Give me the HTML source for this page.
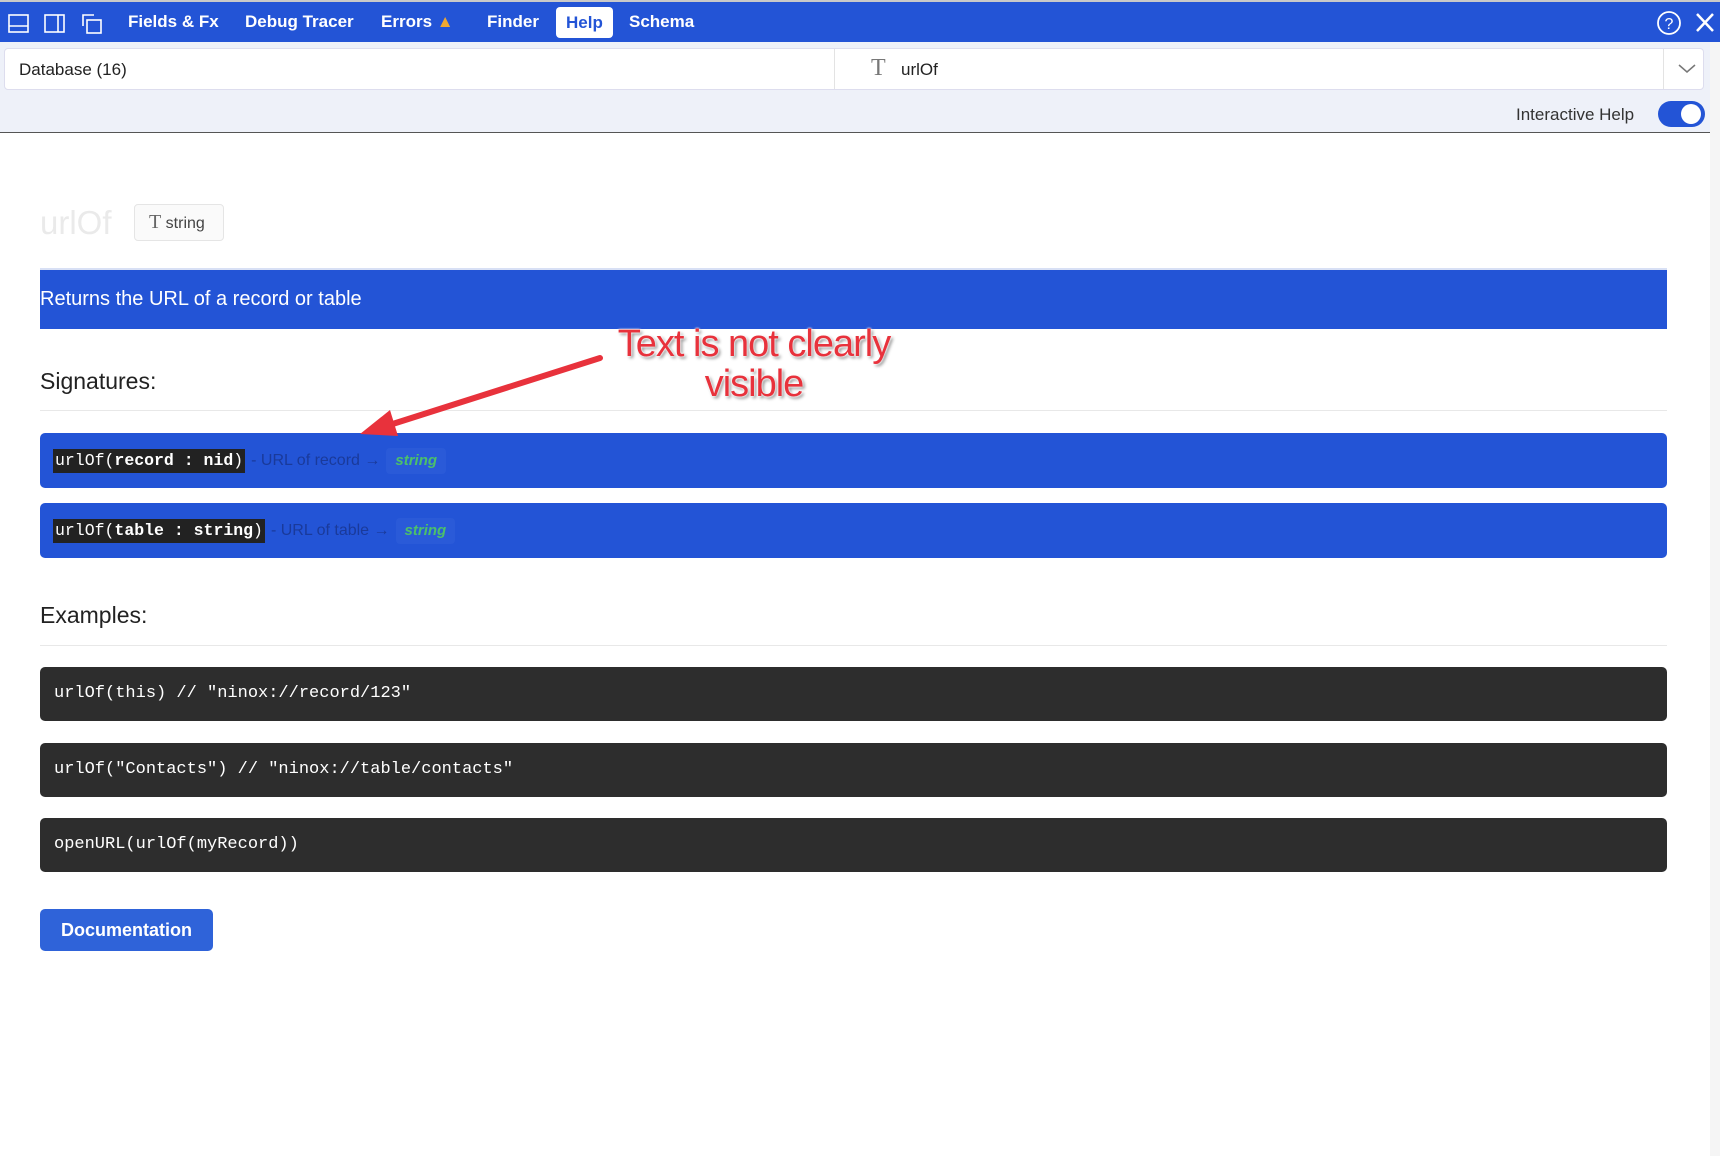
<!DOCTYPE html>
<html><head><meta charset="utf-8"><style>
*{box-sizing:border-box;margin:0;padding:0}
body{width:1720px;height:1156px;background:#fff;font-family:"Liberation Sans",sans-serif;position:relative;overflow:hidden}
.top{position:absolute;left:0;top:0;width:1720px;height:42px;background:#2354d6;border-top:2px solid #c9c9c9}
.tab{position:absolute;top:0;height:40px;line-height:40px;color:#fff;font-weight:bold;font-size:17px}
.help{background:#fff;color:#2354d6;top:5px;height:31px;line-height:31px;padding:0 10px;border-radius:4px}
.sub{position:absolute;left:0;top:42px;width:1710px;height:91px;background:#eef1f9;border-bottom:1.5px solid #555}
.search{position:absolute;left:4px;top:6px;width:1700px;height:42px;background:#fff;border:1px solid #dde;border-radius:4px}
.mono{font-family:"Liberation Mono",monospace}
.sig{position:absolute;left:40px;width:1627px;height:55px;background:#2354d6;border-radius:5px;display:flex;align-items:center;padding-left:13px;white-space:nowrap}
.code{height:24px;line-height:24px;background:#222;color:#fff;font-size:16.5px;padding:0 2px}
.desc{font-size:16px;color:#1a3a9a;margin:0 6px 0 6px}
.ty{height:26px;padding:0 9px;line-height:26px;background:#2a5ad8;color:#4cc06a;font-style:italic;font-weight:bold;font-size:15px;border-radius:4px}
.ex{position:absolute;left:40px;width:1627px;height:54px;background:#2d2d2d;border-radius:5px;color:#fff;font-size:17px;line-height:54px;padding-left:14px}
h2{position:absolute;left:40px;font-size:23px;font-weight:normal;color:#222}
.hr{position:absolute;left:40px;width:1627px;height:1px;background:#e8e8e8}
.ann{position:absolute;color:#e8323c;font-size:38px;text-shadow:0 0 2px #fff,0 0 2px #fff,2px 2px 3px #888;text-align:center;width:400px;left:554px;line-height:40px;white-space:nowrap;letter-spacing:-1px}
</style></head><body>
<div class="top">
<svg style="position:absolute;left:8px;top:10px" width="100" height="24" fill="none" stroke="#fff" stroke-width="1.6"><rect x="1" y="3" width="19" height="17"/><line x1="1" y1="14" x2="20" y2="14"/><rect x="37" y="3" width="19" height="17"/><line x1="50" y1="3" x2="50" y2="20"/><path d="M75 14V3h11"/><rect x="79" y="8" width="14" height="13"/></svg>
<div class="tab" style="left:128px">Fields &amp; Fx</div>
<div class="tab" style="left:245px">Debug Tracer</div>
<div class="tab" style="left:381px">Errors <span style="color:#f0a830">▲</span></div>
<div class="tab" style="left:487px">Finder</div>
<div class="tab help" style="left:556px">Help</div>
<div class="tab" style="left:629px">Schema</div>
<svg style="position:absolute;left:1657px;top:8px" width="60" height="26" fill="none" stroke="#fff" stroke-width="1.8"><circle cx="12" cy="13" r="11"/><text x="12" y="19" fill="#fff" stroke="none" font-size="16" text-anchor="middle" font-family="Liberation Sans">?</text><path d="M40 4l16 17M56 4L40 21" stroke-width="2.5"/></svg>
</div>
<div class="sub">
<div class="search">
<div style="position:absolute;left:14px;top:11px;font-size:17px;color:#222">Database (16)</div>
<div style="position:absolute;left:829px;top:0;width:1px;height:40px;background:#e3e3e3"></div>
<div style="position:absolute;left:866px;top:6px;font-size:24px;color:#777;font-family:'Liberation Serif',serif">T</div>
<div style="position:absolute;left:896px;top:11px;font-size:17px;color:#222">urlOf</div>
<div style="position:absolute;left:1658px;top:0;width:1px;height:40px;background:#e3e3e3"></div>
<svg style="position:absolute;left:1673px;top:15px" width="18" height="10" fill="none" stroke="#777" stroke-width="1.5"><path d="M1 1l8 7 8-7"/></svg>
</div>
<div style="position:absolute;left:1516px;top:63px;font-size:17px;color:#333">Interactive Help</div>
<div style="position:absolute;left:1658px;top:59px;width:47px;height:26px;border-radius:13px;background:#2354d6"><div style="position:absolute;right:4px;top:3px;width:20px;height:20px;border-radius:50%;background:#fff"></div></div>
</div>
<div style="position:absolute;left:1710px;top:42px;width:10px;height:1114px;background:#f5f5f5"></div>
<div style="position:absolute;left:40px;top:204px;font-size:33px;color:#eaeaea">urlOf</div>
<div style="position:absolute;left:134px;top:204px;width:90px;height:37px;border:1px solid #e5e5e5;border-radius:4px;background:#fafafa;font-size:16px;color:#444;line-height:35px;padding-left:14px"><span style="font-family:'Liberation Serif',serif;font-size:20px;color:#666">T</span> string</div>
<div style="position:absolute;left:40px;top:268px;width:1627px;height:61px;background:#2354d6;border-top:2px solid #d8e0f5;color:#fff;font-size:20px;line-height:58px">Returns the URL of a record or table</div>
<h2 style="top:368px">Signatures:</h2>
<div class="hr" style="top:410px"></div>
<div class="sig" style="top:433px"><span class="code mono">urlOf(<b>record : nid</b>)</span><span class="desc">- URL of record →</span><span class="ty">string</span></div>
<div class="sig" style="top:503px"><span class="code mono">urlOf(<b>table : string</b>)</span><span class="desc">- URL of table →</span><span class="ty">string</span></div>
<h2 style="top:602px">Examples:</h2>
<div class="hr" style="top:645px"></div>
<div class="ex mono" style="top:667px">urlOf(this) // "ninox://record/123"</div>
<div class="ex mono" style="top:743px">urlOf("Contacts") // "ninox://table/contacts"</div>
<div class="ex mono" style="top:818px">openURL(urlOf(myRecord))</div>
<div style="position:absolute;left:40px;top:909px;width:173px;height:42px;background:#2f63d9;border-radius:5px;color:#fff;font-size:18px;font-weight:bold;text-align:center;line-height:42px">Documentation</div>
<div class="ann" style="top:324px">Text is not clearly<br>visible</div>
<svg style="position:absolute;left:350px;top:350px" width="260" height="90"><path d="M250 8L30 78" stroke="#e8323c" stroke-width="6" stroke-linecap="round"/><path d="M10 84L40 60 48 86z" fill="#e8323c"/></svg>
</body></html>
